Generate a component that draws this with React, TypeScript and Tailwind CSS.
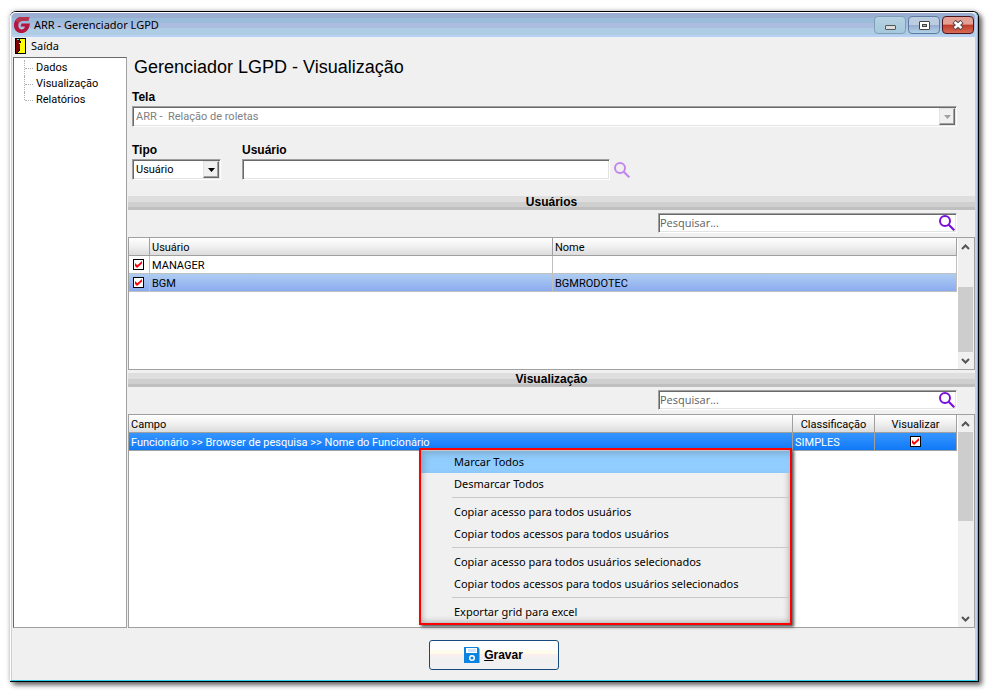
import React, { useState } from 'react';

const sunken =
  'border border-t-[#a0a0a0] border-l-[#a0a0a0] border-r-white border-b-white bg-white shadow-[inset_1px_1px_0_#696969,inset_-1px_-1px_0_#e3e3e3]';

const headCell =
  'h-[18px] border-r border-b border-[#a0a0a0] bg-linear-to-b from-white via-[#f0f0f0] to-[#dcdcdc] px-0.5 pt-0.5 pb-0 leading-[15px] font-normal';

const userCell = 'h-[18px] border-r border-b border-[#c0c0c0] px-0.5 pt-0.5 pb-0 leading-[15px]';

const fieldCell = 'h-[18px] border-r border-b border-[#a0a0a0] px-0.5 pt-0.5 pb-0 leading-[15px]';

const fieldLabel = "mb-px block font-['Liberation_Sans',Arial,sans-serif] text-[12px] leading-4 font-bold";

const treeItems = ['Dados', 'Visualização', 'Relatórios'];

const users = [
  { id: 1, login: 'MANAGER', name: '', selected: false },
  { id: 2, login: 'BGM', name: 'BGMRODOTEC', selected: true },
];

const menuGroups = [
  ['Marcar Todos', 'Desmarcar Todos'],
  ['Copiar acesso para todos usuários', 'Copiar todos acessos para todos usuários'],
  ['Copiar acesso para todos usuários selecionados', 'Copiar todos acessos para todos usuários selecionados'],
  ['Exportar grid para excel'],
];

const Logo = () => (
  <svg viewBox="0 0 16 16" className="h-4 w-4">
    <path d="M15.500 0H8C3 0 0 3.500 0 8.200C0 13 3 16 7.500 16C11 16 15 14 16 6.500H7.500L6.500 9.500H11C10.300 11.700 9.200 12.400 7.700 12.400C5.500 12.400 4.300 10.800 4.300 8.300C4.300 5.500 6.200 4 8.200 4H14.200Z" fill="#b3173f" />
    <path d="M15.500 0H8C5 0 2.500 1.500 1.200 4L4.900 5.800C5.700 4.600 7 4 8.200 4H14.200Z" fill="#b93450" />
  </svg>
);

const DoorIcon = () => (
  <svg viewBox="0 0 11 16" className="h-4 w-[11px]" shapeRendering="crispEdges">
    <rect width="11" height="16" fill="#000" />
    <rect x="5" y="1" width="5" height="14" fill="#ffff00" />
    <path d="M1 1H2V2H3V3H5V11H4V13H3V14H2V15H1Z" fill="#800000" />
    <path d="M4 13H5V15H3V14H4Z" fill="#ffff00" />
    <rect x="2" y="1" width="2" height="1" fill="#00ffff" />
    <rect x="5" y="3" width="1" height="2" fill="#000" />
    <rect x="4" y="5" width="1" height="1" fill="#ffff00" />
  </svg>
);

const SearchIcon = ({ color }: { color: string }) => (
  <svg viewBox="0 0 16 16" className="h-4 w-4" fill="none" stroke={color}>
    <circle cx="6" cy="6" r="5" strokeWidth="2" />
    <path d="M9.500 9.500L15.300 15.300" strokeWidth="2.200" />
  </svg>
);

const FloppyIcon = () => (
  <svg viewBox="0 0 16 16" className="h-4 w-4">
    <path d="M0 0H14L15.500 2V16H0Z" fill="#0a84e0" />
    <rect x="2" y="1" width="11" height="5" fill="#fff" />
    <rect x="4" y="2" width="8" height="3" fill="#cfe4f7" />
    <circle cx="8" cy="11" r="2.300" fill="none" stroke="#fff" strokeWidth="1.500" />
  </svg>
);

const Chevron = ({ up }: { up?: boolean }) => (
  <svg viewBox="0 0 9 6" className="h-1.5 w-[9px]" fill="none" stroke="#555" strokeWidth="2">
    <path d={up ? 'M1 5L4.500 1.500L8 5' : 'M1 1L4.500 4.500L8 1'} />
  </svg>
);

const Check = ({ label }: { label: string }) => {
  const [checked, setChecked] = useState(true);
  return (
    <span className="relative mx-auto block h-[11px] w-[11px]">
      <input
        type="checkbox"
        aria-label={label}
        checked={checked}
        onChange={() => setChecked(!checked)}
        className="block h-[11px] w-[11px] appearance-none border border-black bg-white"
      />
      {checked && (
        <svg viewBox="0 0 11 11" className="pointer-events-none absolute inset-0 h-[11px] w-[11px]">
          <path d="M2 4V7L4 9L9 4.500V2L4.300 6.200Z" fill="#f00" />
        </svg>
      )}
    </span>
  );
};

const Combo = ({ id, value, disabled }: { id: string; value: string; disabled?: boolean }) => (
  <div className="relative">
    <select id={id} disabled={disabled} className={`block h-[21px] w-full appearance-none pt-px pl-[3px] text-[11px] leading-4 opacity-100 ${sunken} ${disabled ? 'text-[#808080]' : 'text-black'}`}>
      <option>{value}</option>
    </select>
    <span className="pointer-events-none absolute top-0.5 right-0.5 flex h-[17px] w-4 items-center justify-center border border-t-[#e3e3e3] border-r-[#696969] border-b-[#696969] border-l-[#e3e3e3] bg-[#f0f0f0] shadow-[inset_-1px_-1px_0_#a0a0a0]">
      <svg viewBox="0 0 7 4" className="h-1 w-[7px]"><path d="M0 0H7L3.500 4Z" fill={disabled ? '#a0a0a0' : '#000'} /></svg>
    </span>
  </div>
);

const SectionBar = ({ title }: { title: string }) => (
  <h2 className="mt-[3px] h-3.5 bg-[linear-gradient(#dedede_0_6px,#cfcfcf_6px_11px,#bfbfbf_11px)] text-center font-['Liberation_Sans',Arial,sans-serif] text-[12px] leading-3 font-bold">
    {title}
  </h2>
);

const SearchBox = ({ label }: { label: string }) => (
  <div className="flex justify-end pt-[3px] pr-[18px] pb-1">
    <div className={`flex h-5 w-[299px] items-center pr-px ${sunken}`}>
      <input
        type="text"
        aria-label={label}
        placeholder="Pesquisar..."
        className="min-w-0 flex-1 bg-transparent pl-px font-['Open_Sans','Noto_Sans',sans-serif] text-[11px] leading-4 outline-none placeholder:text-[#606060]"
      />
      <button type="button" aria-label="Pesquisar"><SearchIcon color="#7a0fdc" /></button>
    </div>
  </div>
);

const ScrollBar = ({ thumb }: { thumb: string }) => (
  <div className="flex w-[17px] shrink-0 flex-col border-l border-white bg-[#f0f0f0]">
    <button type="button" aria-label="Rolar para cima" className="flex h-[17px] w-[15px] items-center justify-center"><Chevron up /></button>
    <div className="flex flex-1 flex-col">
      <div className={`w-[15px] bg-[#cdcdcd] ${thumb}`} />
    </div>
    <button type="button" aria-label="Rolar para baixo" className="flex h-[17px] w-[15px] items-center justify-center"><Chevron /></button>
  </div>
);

const ContextMenu = () => (
  <div role="menu" className="absolute top-[33px] left-[290px] w-[373px] border-2 border-[#f00] bg-[#f0f0f0] pt-px font-['Noto_Sans','Open_Sans',sans-serif] text-[11px] shadow-[2px_2px_3px_#555,inset_0_0_7px_#999]">
    {menuGroups.map((group, i) => (
      <div key={i}>
        {i > 0 && <hr className="mt-0.5 mb-[3px] ml-[31px] border-[#c8c8c8]" />}
        {group.map((item) => (
          <button
            key={item}
            type="button"
            role="menuitem"
            className={`block h-[22px] w-full pl-[33px] text-left leading-5 ${item === 'Marcar Todos' ? 'bg-[#91cdff] shadow-[inset_4px_3px_6px_#7faed2]' : ''}`}
          >
            {item}
          </button>
        ))}
      </div>
    ))}
  </div>
);

const WindowButtons = () => (
  <div className="mr-px flex gap-0.5 pt-[3px]">
    <button type="button" aria-label="Minimizar" className="flex h-[18px] w-8 items-center justify-center rounded-sm border border-[#7f9fb8] bg-linear-to-b from-[#b5d2e2] to-[#a5c8dc] pt-1">
      <span className="h-[5px] w-[11px] rounded-[1px] border border-[#555] bg-[#ddd]" />
    </button>
    <button type="button" aria-label="Maximizar" className="flex h-[18px] w-8 items-center justify-center rounded-sm border border-[#5f7ba4] bg-[linear-gradient(#bccde2_0_50%,#98abd0_50%,#b0d2e6)]">
      <span className="flex h-[9px] w-[11px] items-center justify-center rounded-[1px] border border-[#444] bg-white">
        <span className="h-[3px] w-[5px] border border-[#444] bg-[#9bb]" />
      </span>
    </button>
    <button type="button" aria-label="Fechar" className="flex h-[18px] w-8 items-center justify-center rounded-sm border border-[#4a1420] bg-[linear-gradient(#e5a095_0_45%,#c03a28_50%,#d66b55)]">
      <svg viewBox="0 0 12 10" className="h-2.5 w-3" fill="none">
        <path d="M2 1.500L10 8.500M10 1.500L2 8.500" stroke="#50404a" strokeWidth="4.600" />
        <path d="M2.500 2L9.500 8M9.500 2L2.500 8" stroke="#fff" strokeWidth="2.600" />
      </svg>
    </button>
  </div>
);

export default function App() {
  const [user, setUser] = useState('');

  return (
    <div className="h-screen min-h-[620px] bg-white pt-[11px] pr-[11px] pb-3 pl-2.5 font-[Roboto,'Liberation_Sans',sans-serif] text-[11px] text-black">
      <div className="flex h-full flex-col rounded-t-md border-t border-r border-b border-black bg-[#f0f0f0] shadow-[3px_3px_5px_#666,0_0_5px_#bbb]">
        <div className="flex min-h-0 flex-1 flex-col rounded-t-md border-t border-r border-b border-l border-t-white border-r-[#3ecdf0] border-b-[#2fcbe8] border-l-white">
          <div className="flex min-h-0 flex-1 flex-col rounded-t-sm border-r-2 border-l border-[#bed3f2]">
            {/* Barra de título */}
            <header className="flex h-6 shrink-0 items-start justify-between rounded-t-sm bg-[linear-gradient(#9baed2_0_5px,#9bbbda_5px_10px,#abbcdf_10px_15px,#aecde5_15px_22px,#b9d1f3_22px)]">
              <div className="flex items-center gap-1 pt-1 pl-0.5">
                <Logo />
                <h1 className="font-['Noto_Sans','Open_Sans',sans-serif] text-[11px] leading-4">ARR - Gerenciador LGPD</h1>
              </div>
              <WindowButtons />
            </header>

            <nav className="flex h-5 shrink-0 items-start pt-px pl-[3px]">
              <button type="button" className="flex items-center gap-[5px] font-['Noto_Sans','Open_Sans',sans-serif] text-[11px] leading-4">
                <DoorIcon />
                Saída
              </button>
            </nav>

            <div className="flex min-h-0 flex-1">
              {/* Árvore de opções */}
              <aside className="mx-px w-[114px] shrink-0 border border-t-[#696969] border-r-[#a0a0a0] border-b-[#a0a0a0] border-l-[#696969] bg-white pt-0.5 pl-2.5">
                <ul>
                  {treeItems.map((item, i) => (
                    <li key={item} className="flex h-4">
                      <span className={`w-px border-l border-dotted border-[#b0b0b0] ${i === treeItems.length - 1 ? 'h-2' : 'h-4'}`} />
                      <span className="mt-2 mr-[3px] h-px w-2 border-t border-dotted border-[#b0b0b0]" />
                      <button type="button" className="leading-4">{item}</button>
                    </li>
                  ))}
                </ul>
              </aside>

              <main className="flex min-w-0 flex-1 flex-col">
                <div className="pr-[18px] pl-1">
                  <h2 className="mb-3 pl-0.5 font-['Liberation_Sans',Arial,sans-serif] text-[18px] leading-5">Gerenciador LGPD - Visualização</h2>
                  <label htmlFor="tela" className={fieldLabel}>Tela</label>
                  <Combo id="tela" value={'ARR -\u00a0 Relação de roletas'} disabled />
                  <div className="mt-[15px] flex">
                    <div className="w-[89px]">
                      <label htmlFor="tipo" className={fieldLabel}>Tipo</label>
                      <Combo id="tipo" value="Usuário" />
                    </div>
                    <div className="ml-[21px] w-[368px]">
                      <label htmlFor="usuario" className={fieldLabel}>Usuário</label>
                      <input id="usuario" type="text" value={user} onChange={(e) => setUser(e.target.value)} className={`block h-[21px] w-full px-1 outline-none ${sunken}`} />
                    </div>
                    <button type="button" aria-label="Buscar usuário" className="ml-1 self-end pb-0.5"><SearchIcon color="#c287ee" /></button>
                  </div>
                </div>

                <div className="pt-[13px]"><SectionBar title="Usuários" /></div>
                <SearchBox label="Pesquisar usuários" />
                <div className="flex h-[133px] shrink-0 border border-[#a0a0a0] bg-white">
                  <div className="min-w-0 flex-1">
                    <table className="w-full table-fixed border-separate border-spacing-0 text-left">
                      <colgroup>
                        <col className="w-[21px]" />
                        <col className="w-[403px]" />
                        <col />
                      </colgroup>
                      <thead>
                        <tr>
                          <th className={headCell} aria-label="Selecionar" />
                          <th className={headCell}>Usuário</th>
                          <th className={headCell}>Nome</th>
                        </tr>
                      </thead>
                      <tbody>
                        {users.map((u) => (
                          <tr key={u.id} className={u.selected ? 'bg-linear-to-b from-[#aecdf2] to-[#8aa9ef]' : ''}>
                            <td className="h-[18px] border-r border-b border-[#c0c0c0] pr-px"><Check label={u.login} /></td>
                            <td className={userCell}>{u.login}</td>
                            <td className={userCell}>{u.name}</td>
                          </tr>
                        ))}
                      </tbody>
                    </table>
                  </div>
                  <ScrollBar thumb="mt-8 flex-1" />
                </div>

                <SectionBar title="Visualização" />
                <SearchBox label="Pesquisar campos" />
                <div className="relative flex min-h-0 flex-1 border border-[#a0a0a0] bg-white">
                  <div className="min-w-0 flex-1">
                    <table className="w-full table-fixed border-separate border-spacing-0 text-left">
                      <colgroup>
                        <col />
                        <col className="w-[82px]" />
                        <col className="w-[82px]" />
                      </colgroup>
                      <thead>
                        <tr>
                          <th className={headCell}>Campo</th>
                          <th className={`${headCell} text-center`}>Classificação</th>
                          <th className={`${headCell} text-center`}>Visualizar</th>
                        </tr>
                      </thead>
                      <tbody>
                        <tr className="bg-linear-to-b from-[#3595ff] to-[#0a78f8] text-white">
                          <td className={fieldCell}>{'Funcionário >> Browser de pesquisa >> Nome do Funcionário'}</td>
                          <td className={fieldCell}>SIMPLES</td>
                          <td className="border-r border-b border-[#a0a0a0]"><Check label="Visualizar" /></td>
                        </tr>
                      </tbody>
                    </table>
                  </div>
                  <ScrollBar thumb="h-[89px]" />
                  <ContextMenu />
                </div>
              </main>
            </div>

            <footer className="flex h-[52px] shrink-0 items-start justify-center pt-3">
              <button type="button" className="flex h-[30px] w-[130px] items-center justify-center gap-1 rounded-[3px] border border-[#164a7c] bg-[linear-gradient(#fff_0_33%,#fffcec_33%_45%,#fbeeee_45%_58%,#f0f0f0_58%)] font-['Liberation_Sans',Arial,sans-serif] text-[12px] font-bold">
                <FloppyIcon />
                <span><u>G</u>ravar</span>
              </button>
            </footer>
          </div>
        </div>
      </div>
    </div>
  );
}
